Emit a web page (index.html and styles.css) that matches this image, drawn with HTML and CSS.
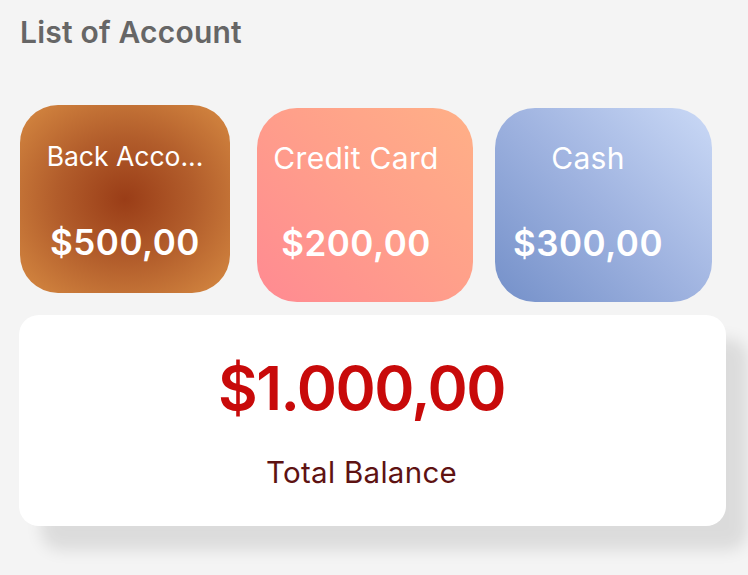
FILE: index.html
```html
<!DOCTYPE html>
<html>
<head>
<meta charset="utf-8">
<link rel="stylesheet" href="styles.css">
</head>
<body>
<div class="page">
  <h1 class="title">List of Account</h1>
  <div class="cards">
    <div class="card card-bank">
      <div class="label">Back Acco...</div>
      <div class="amount">$500,00</div>
    </div>
    <div class="card card-credit">
      <div class="label">Credit Card</div>
      <div class="amount">$200,00</div>
    </div>
    <div class="card card-cash">
      <div class="label">Cash</div>
      <div class="amount">$300,00</div>
    </div>
  </div>
  <div class="total">
    <div class="total-amount">$1.000,00</div>
    <div class="total-label">Total Balance</div>
  </div>
</div>
</body>
</html>
```
FILE: styles.css
```css
html, body {
  margin: 0;
  padding: 0;
  background: #f4f4f4;
  font-family: Inter, "Noto Sans", sans-serif;
}
.page {
  width: 748px;
  height: 575px;
  padding: 0 22px 0 19px;
  box-sizing: border-box;
  display: flex;
  flex-direction: column;
}
.title {
  margin: 14px 0 0 1px;
  font-size: 30px;
  line-height: 36px;
  font-weight: 600;
  color: #666666;
  letter-spacing: 0.2px;
}
.cards {
  display: flex;
  align-items: flex-start;
  margin-top: 55px;
  padding-left: 1px;
}
.card {
  width: 216px;
  height: 194px;
  border-radius: 40px;
  box-sizing: border-box;
  color: #ffffff;
  display: flex;
  flex-direction: column;
  align-items: center;
  margin-top: 3px;
}
.card-bank {
  width: 210px;
  height: 188px;
  margin-top: 0;
  margin-right: 27px;
  border-radius: 38px;
  background: radial-gradient(ellipse 78% 78% at 50% 50%, #9a3d17 0%, #b25d2b 42%, #d0823e 82%, #dc9348 100%);
}
.card-credit {
  margin-right: 22px;
  padding-right: 18px;
  background: linear-gradient(45deg, #ff8a92 0%, #ffa08a 55%, #ffb087 100%);
}
.card-cash {
  width: 217px;
  padding-right: 31px;
  background: linear-gradient(45deg, #7490c9 0%, #9fb3e0 50%, #cad9f6 100%);
}
.label {
  margin-top: 32px;
  font-size: 30px;
  line-height: 36px;
  font-weight: 400;
  letter-spacing: 0.3px;
  white-space: nowrap;
}
.card-bank .label {
  margin-top: 34px;
  font-size: 26.5px;
  line-height: 34px;
  letter-spacing: 0;
}
.amount {
  margin-top: 46px;
  font-size: 35px;
  line-height: 42px;
  font-weight: 600;
  letter-spacing: 0.5px;
  white-space: nowrap;
}
.card-bank .amount {
  margin-top: 48px;
}
.total {
  margin-top: 13px;
  height: 211px;
  padding-right: 22px;
  background: #ffffff;
  border-radius: 20px;
  box-shadow: 22px 24px 16px rgba(0, 0, 0, 0.1);
  display: flex;
  flex-direction: column;
  align-items: center;
}
.total-amount {
  margin-top: 38px;
  font-size: 61px;
  line-height: 70px;
  font-weight: 600;
  color: #c80a0a;
  letter-spacing: -1.5px;
}
.total-label {
  margin-top: 32px;
  font-size: 29.5px;
  line-height: 34px;
  letter-spacing: 0.3px;
  color: #5e1212;
}
```
